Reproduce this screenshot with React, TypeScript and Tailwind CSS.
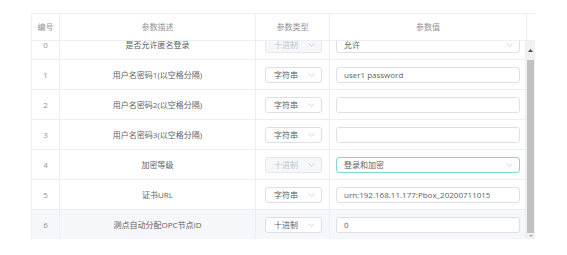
import React from 'react';

type Row = {
  id: number;
  desc: string;
  type: string;
  typeDisabled?: boolean;
  value: string;
  valueKind: 'input' | 'select';
  focused?: boolean;
  highlight?: boolean;
};

const rows: Row[] = [
  { id: 0, desc: '是否允许匿名登录', type: '十进制', typeDisabled: true, value: '允许', valueKind: 'select' },
  { id: 1, desc: '用户名密码1(以空格分隔)', type: '字符串', value: 'user1 password', valueKind: 'input' },
  { id: 2, desc: '用户名密码2(以空格分隔)', type: '字符串', value: '', valueKind: 'input' },
  { id: 3, desc: '用户名密码3(以空格分隔)', type: '字符串', value: '', valueKind: 'input' },
  { id: 4, desc: '加密等级', type: '十进制', typeDisabled: true, value: '登录和加密', valueKind: 'select', focused: true },
  { id: 5, desc: '证书URL', type: '字符串', value: 'urn:192.168.11.177:Pbox_20200711015', valueKind: 'input' },
  { id: 6, desc: '测点自动分配OPC节点ID', type: '十进制', value: '0', valueKind: 'input', highlight: true },
];

const Chevron = () => (
  <svg width="7" height="4" viewBox="0 0 7 4" className="shrink-0">
    <path d="M0.5 0.5 L3.5 3.3 L6.5 0.5" fill="none" stroke="#c0c4cc" strokeWidth="0.7" />
  </svg>
);

const TypeSelect = ({ label, disabled }: { label: string; disabled?: boolean }) => (
  <div
    className={`flex h-[16px] w-[57px] items-center justify-between rounded-[3px] border pl-[8px] pr-[6px] ${
      disabled ? 'border-[#e4e7ed] bg-[#f5f7fa] text-[#c0c4cc]' : 'border-[#dcdfe6] bg-white text-[#606266]'
    }`}
  >
    <span>{label}</span>
    <Chevron />
  </div>
);

const ValueCell = ({ row }: { row: Row }) => {
  const border = row.focused ? 'border-[#7fd8cc]' : 'border-[#dcdfe6]';
  return (
    <div
      className={`flex h-[16px] w-[184px] items-center justify-between rounded-[3px] border bg-white pl-[7px] pr-[6px] text-[#606266] ${border}`}
    >
      <span className="whitespace-nowrap">{row.value}</span>
      {row.valueKind === 'select' && <Chevron />}
    </div>
  );
};

const TableRow = ({ row }: { row: Row }) => (
  <div
    className={`grid h-[30px] grid-cols-[28px_196px_74px_197px] border-b border-[#ebeef5] ${
      row.highlight ? 'bg-[#f5f7fa]' : 'bg-white'
    }`}
  >
    <div className="flex items-center justify-center border-r border-[#ebeef5] text-[#909399]">{row.id}</div>
    <div className="flex items-center justify-center border-r border-[#ebeef5]">{row.desc}</div>
    <div className="flex items-center border-r border-[#ebeef5] pl-[9px]">
      <TypeSelect label={row.type} disabled={row.typeDisabled} />
    </div>
    <div className="flex items-center pl-[6px]">
      <ValueCell row={row} />
    </div>
  </div>
);

const Scrollbar = () => (
  <div className="flex w-[9px] flex-col items-center bg-[#f1f1f1]">
    <div className="flex h-[19px] items-center justify-center">
      <svg width="5" height="3" viewBox="0 0 5 3">
        <path d="M0 3 L2.5 0 L5 3 Z" fill="#505050" />
      </svg>
    </div>
    <div className="w-[7px] flex-1 bg-[#c1c1c1]" />
    <div className="flex h-[6px] items-center justify-center">
      <svg width="4" height="2" viewBox="0 0 4 2">
        <path d="M0 0 L2 2 L4 0 Z" fill="#a3a3a3" />
      </svg>
    </div>
  </div>
);

export default function App() {
  return (
    <div
      className="h-[255px] w-[567px] bg-white pl-[31px] pt-[13px] text-[8px] text-[#606266]"
      style={{ fontFamily: '"Open Sans", "Noto Sans CJK SC", sans-serif' }}
    >
      <div className="w-[504px] border-l border-t border-[#ebeef5]">
        <div className="grid h-[27px] grid-cols-[28px_196px_74px_197px_9px] border-b border-[#ebeef5] text-[#909399]">
          <div className="flex items-center justify-center border-r border-[#ebeef5]">编号</div>
          <div className="flex items-center justify-center border-r border-[#ebeef5]">参数描述</div>
          <div className="flex items-center justify-center border-r border-[#ebeef5]">参数类型</div>
          <div className="flex items-center justify-center border-r border-[#ebeef5]">参数值</div>
          <div />
        </div>
        <div className="flex h-[198px]">
          <div className="w-[495px] overflow-hidden border-r border-[#ebeef5]">
            <div className="-mt-[11px]">
              {rows.map((r) => (
                <TableRow key={r.id} row={r} />
              ))}
            </div>
          </div>
          <Scrollbar />
        </div>
      </div>
    </div>
  );
}
